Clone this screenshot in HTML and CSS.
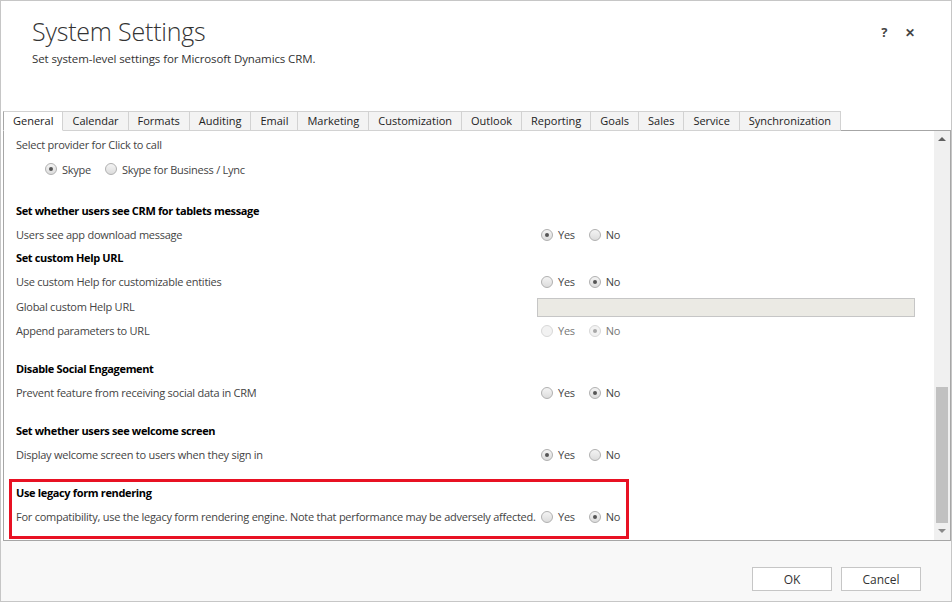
FILE: index.html
```html
<!DOCTYPE html>
<html lang="en">
<head>
    <meta charset="UTF-8">
    <meta name="viewport" content="width=device-width, initial-scale=1.0">
    <title>System Settings</title>
    <link rel="stylesheet" href="styles.css">
</head>
<body>
    <div class="dialog">
        <div class="header">
            <div class="titles">
                <h1>System Settings</h1>
                <p class="subtitle">Set system-level settings for Microsoft Dynamics CRM.</p>
            </div>
            <div class="header-actions">
                <span class="help">?</span>
                <span class="close">&#x2715;</span>
            </div>
        </div>

        <ul class="tabs">
            <li class="active">General</li>
            <li>Calendar</li>
            <li>Formats</li>
            <li>Auditing</li>
            <li>Email</li>
            <li>Marketing</li>
            <li>Customization</li>
            <li>Outlook</li>
            <li>Reporting</li>
            <li>Goals</li>
            <li>Sales</li>
            <li>Service</li>
            <li>Synchronization</li>
        </ul>

        <div class="panel">
            <div class="content">
                <div class="section first">
                    <div class="label">Select provider for Click to call</div>
                    <div class="options indent">
                        <span class="radio checked"></span><span class="opt">Skype</span>
                        <span class="radio"></span><span class="opt">Skype for Business / Lync</span>
                    </div>
                </div>

                <div class="section tablets">
                    <h2>Set whether users see CRM for tablets message</h2>
                    <div class="row">
                        <span class="label">Users see app download message</span>
                        <div class="options">
                            <span class="radio checked"></span><span class="opt">Yes</span>
                            <span class="radio"></span><span class="opt">No</span>
                        </div>
                    </div>
                </div>

                <div class="section help-url">
                    <h2>Set custom Help URL</h2>
                    <div class="row">
                        <span class="label">Use custom Help for customizable entities</span>
                        <div class="options">
                            <span class="radio"></span><span class="opt">Yes</span>
                            <span class="radio checked"></span><span class="opt">No</span>
                        </div>
                    </div>
                    <div class="row url-row">
                        <span class="label">Global custom Help URL</span>
                        <div class="text-field"></div>
                    </div>
                    <div class="row">
                        <span class="label">Append parameters to URL</span>
                        <div class="options disabled">
                            <span class="radio"></span><span class="opt">Yes</span>
                            <span class="radio checked"></span><span class="opt">No</span>
                        </div>
                    </div>
                </div>

                <div class="section">
                    <h2>Disable Social Engagement</h2>
                    <div class="row">
                        <span class="label">Prevent feature from receiving social data in CRM</span>
                        <div class="options">
                            <span class="radio"></span><span class="opt">Yes</span>
                            <span class="radio checked"></span><span class="opt">No</span>
                        </div>
                    </div>
                </div>

                <div class="section">
                    <h2>Set whether users see welcome screen</h2>
                    <div class="row">
                        <span class="label">Display welcome screen to users when they sign in</span>
                        <div class="options">
                            <span class="radio checked"></span><span class="opt">Yes</span>
                            <span class="radio"></span><span class="opt">No</span>
                        </div>
                    </div>
                </div>

                <div class="section highlight">
                    <h2>Use legacy form rendering</h2>
                    <div class="row">
                        <span class="label">For compatibility, use the legacy form rendering engine. Note that performance may be adversely affected.</span>
                        <div class="options">
                            <span class="radio"></span><span class="opt">Yes</span>
                            <span class="radio checked"></span><span class="opt">No</span>
                        </div>
                    </div>
                </div>
            </div>

            <div class="scrollbar">
                <div class="arrow up"></div>
                <div class="track">
                    <div class="thumb"></div>
                </div>
                <div class="arrow down"></div>
            </div>
        </div>

        <div class="footer">
            <button>OK</button>
            <button>Cancel</button>
        </div>
    </div>
</body>
</html>
```

FILE: styles.css
```css
* {
    box-sizing: border-box;
}

body {
    margin: 0;
    font-family: "Open Sans", "Noto Sans", sans-serif;
    font-size: 11px;
    letter-spacing: -0.25px;
    color: #444;
    background-color: #fff;
}

.dialog {
    width: 952px;
    height: 602px;
    border: 1px solid #c6c6c6;
    display: flex;
    flex-direction: column;
}

.header {
    height: 110px;
    display: flex;
    justify-content: space-between;
    padding: 12px 36px 0 31px;
}

h1 {
    margin: 0;
    font-size: 25px;
    font-weight: 300;
    letter-spacing: -0.2px;
    color: #333;
    line-height: 36px;
}

.subtitle {
    margin: 2px 0 0;
    font-size: 11.5px;
    letter-spacing: -0.1px;
    color: #333;
}

.header-actions {
    display: flex;
    gap: 18px;
    padding-top: 10px;
    font-size: 13px;
    font-weight: bold;
    color: #444;
}

.close {
    font-size: 12px;
    font-weight: bold;
    padding-top: 1px;
}

.tabs {
    list-style: none;
    margin: 0 0 -1px 2px;
    padding: 0;
    display: flex;
    height: 20px;
    position: relative;
}

.tabs li {
    height: 20px;
    line-height: 18px;
    padding: 0 9px;
    background-color: #f3f3f3;
    border: 1px solid #d2d2d2;
    border-left: none;
    color: #222;
    font-size: 11px;
    letter-spacing: 0;
}

.tabs li:first-child {
    border-left: 1px solid #a6a6a6;
}

.tabs li.active {
    background-color: #fff;
    border-bottom-color: #fff;
}

.panel {
    flex: 1;
    display: flex;
    margin-left: 2px;
    border: 1px solid #a6a6a6;
    border-right: none;
    min-height: 0;
}

.content {
    flex: 1;
    padding: 2px 0 0 12px;
}

.section h2 {
    margin: 0;
    height: 24px;
    line-height: 24px;
    font-size: 11px;
    font-weight: bold;
    letter-spacing: -0.35px;
    color: #000;
}

.section > .label,
.row {
    height: 24px;
    line-height: 24px;
}

.section {
    margin-top: 14px;
}

.section.first {
    margin-top: 0;
}

.section.tablets {
    margin-top: 18px;
}

.section.help-url {
    margin-top: -1px;
}

.row {
    display: grid;
    grid-template-columns: 525px 1fr;
    align-items: center;
}

.row.url-row {
    margin-top: 1px;
}

.label {
    white-space: nowrap;
}

.options {
    display: flex;
    align-items: center;
    height: 24px;
}

.options.indent {
    padding-left: 29px;
}

.radio {
    width: 12px;
    height: 12px;
    border-radius: 50%;
    border: 1px solid #b0b0b0;
    background: linear-gradient(#f4f4f4, #dcdcdc);
    margin-right: 5px;
    position: relative;
}

.radio.checked::after {
    content: "";
    position: absolute;
    left: 3px;
    top: 3px;
    width: 4px;
    height: 4px;
    border-radius: 50%;
    background-color: #555;
}

.opt {
    margin-right: 14px;
    color: #444;
}

.options.disabled .radio {
    border-color: #d8d8d8;
    background: #f2f2f2;
}

.options.disabled .radio.checked::after {
    background-color: #a8a8a8;
}

.options.disabled .opt {
    color: #777;
}

.text-field {
    height: 19px;
    width: 378px;
    margin-left: -4px;
    background-color: #ebeae4;
    border: 1px solid #c6c6c6;
}

.highlight {
    width: 620px;
    margin: 12px 0 0 -7px;
    padding: 0 0 7px 4px;
    border: 3px solid #e81123;
}

.highlight h2 {
    height: 23px;
    line-height: 21px;
}

.scrollbar {
    width: 17px;
    background-color: #f0f0f0;
    display: flex;
    flex-direction: column;
    border-right: 1px solid #a6a6a6;
}

.arrow {
    height: 17px;
    position: relative;
}

.arrow::after {
    content: "";
    position: absolute;
    left: 4px;
    border-left: 4px solid transparent;
    border-right: 4px solid transparent;
}

.arrow.up::after {
    top: 6px;
    border-bottom: 4px solid #606060;
}

.arrow.down::after {
    top: 6px;
    border-top: 4px solid #8a8a8a;
}

.track {
    flex: 1;
    display: flex;
    flex-direction: column;
    justify-content: flex-end;
    padding: 0 2px;
}

.thumb {
    height: 136px;
    background-color: #c1c1c1;
}

.footer {
    height: 60px;
    background-color: #f8f8f8;
    display: flex;
    justify-content: flex-end;
    align-items: flex-start;
    gap: 9px;
    padding: 26px 30px 0 0;
}

.footer button {
    width: 80px;
    height: 24px;
    background-color: #fff;
    border: 1px solid #c6c6c6;
    font-family: "Open Sans", "Noto Sans", sans-serif;
    font-size: 12px;
    color: #333;
    padding: 0;
}
```
